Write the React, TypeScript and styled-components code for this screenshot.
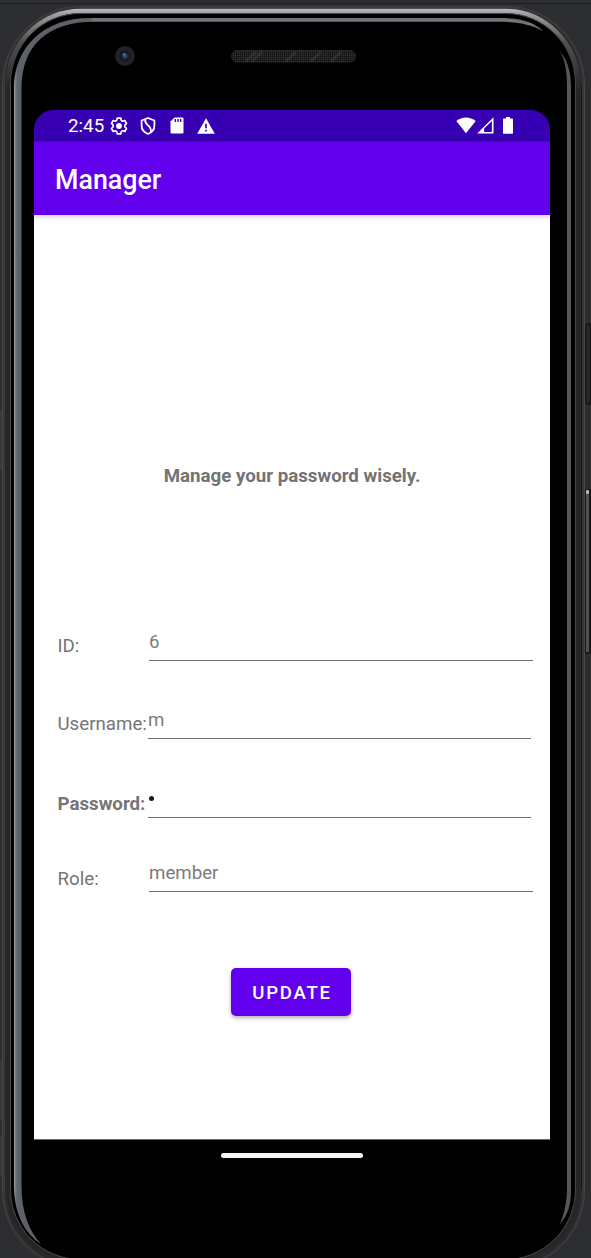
import React from "react";
import styled, { createGlobalStyle } from "styled-components";

const GlobalStyle = createGlobalStyle`
  * { box-sizing: border-box; }
  body { margin: 0; background: #2b2d30; font-family: Roboto, "Liberation Sans", sans-serif; }
`;

const Stage = styled.div`
  position: relative;
  width: 591px;
  height: 1258px;
  overflow: hidden;
  background: #2b2d30;
`;

const Bezel = styled.svg`
  position: absolute;
  inset: 0;
  display: block;
`;

const Phone = styled.div`
  position: relative;
  display: flex;
  flex-direction: column;
  height: 100%;
  padding: 0 41px 0 34px;
`;

const Forehead = styled.div`
  height: 110px;
  flex: none;
`;

const Screen = styled.main`
  display: flex;
  flex-direction: column;
  flex: none;
  height: 1029.5px;
  background: linear-gradient(#3700b3 40px, #fff 40px);
  border-bottom: 1px solid #6b6b6b;
  border-radius: 20px 20px 0 0;
  overflow: hidden;
`;

const StatusBar = styled.div`
  display: flex;
  flex: none;
  align-items: center;
  height: 31px;
  padding: 0 37px 0 34px;
  background: #3700b3;
  color: #fff;
`;

const Clock = styled.span`
  width: 42px;
  font-size: 18.8px;
  line-height: 31px;
  padding-top: 1px;
`;

const StatusIcons = styled.div<{ $gap: number }>`
  display: flex;
  align-items: center;
  gap: ${(p) => p.$gap}px;
`;

const Spacer = styled.div`
  flex: 1;
`;

const AppBar = styled.header`
  flex: none;
  height: 74px;
  padding-left: 21px;
  background: linear-gradient(#4b00d2 1px, #6200ee 1px);
  box-shadow: 0 1px 5px rgba(0, 0, 0, 0.25);
`;

const Title = styled.h1`
  margin: 0;
  color: #fff;
  font-size: 26.8px;
  font-weight: 500;
  line-height: 79px;
`;

const Content = styled.section`
  display: flex;
  flex-direction: column;
`;

const Headline = styled.p`
  margin: 249px 0 0;
  color: #737373;
  font-size: 18.7px;
  font-weight: 700;
  line-height: 24px;
  text-align: center;
`;

const Form = styled.div`
  display: flex;
  flex-direction: column;
  padding: 141px 0 0 23px;
`;

const Row = styled.label<{ $height: number }>`
  display: flex;
  align-items: flex-end;
  height: ${(p) => p.$height}px;
`;

const Label = styled.span<{ $bold?: boolean; $lift: number; $width: number }>`
  flex: none;
  width: ${(p) => p.$width}px;
  margin-bottom: ${(p) => p.$lift}px;
  padding-left: 0.5px;
  color: #757575;
  font-size: 18.7px;
  font-weight: ${(p) => (p.$bold ? 700 : 400)};
  line-height: 22px;
  white-space: nowrap;
`;

const Field = styled.span<{ $width: number; $dark?: boolean }>`
  width: ${(p) => p.$width}px;
  padding-bottom: 7px;
  border-bottom: 1.4px solid #707070;
  color: ${(p) => (p.$dark ? "#212121" : "#7b7b7b")};
  font-size: 18.7px;
  line-height: 22px;
`;

const Dot = styled.i`
  display: block;
  width: 5px;
  height: 5px;
  margin: 8px 0 9px 1px;
  border-radius: 50%;
  background: #1c1c1c;
`;

const UpdateButton = styled.button`
  align-self: center;
  width: 120px;
  height: 48px;
  margin: 76px 2px 0 0;
  padding: 1px 0 0 2px;
  border: 0;
  border-radius: 5px;
  background: #6200ee;
  box-shadow: 0 2px 4px rgba(0, 0, 0, 0.32);
  color: #fff;
  font: 500 18.6px/24px Roboto, sans-serif;
  letter-spacing: 1.75px;
`;

const Navigation = styled.nav`
  display: flex;
  justify-content: center;
  padding-top: 13px;
`;

const HomeHandle = styled.span`
  width: 142px;
  height: 5px;
  border-radius: 3px;
  background: #f4f4f4;
`;

const PhoneBody = () => (
  <Bezel width="591" height="1258" viewBox="0 0 591 1258" fill="none">
    <defs>
      <linearGradient id="rim" x1="0" y1="9" x2="0" y2="90" gradientUnits="userSpaceOnUse">
        <stop offset="0" stopColor="#b6b9bb" />
        <stop offset=".07" stopColor="#999c9e" />
        <stop offset=".4" stopColor="#505152" />
        <stop offset="1" stopColor="#262626" />
      </linearGradient>
      <linearGradient id="glassLeft" x1="14" y1="0" x2="22" y2="0" gradientUnits="userSpaceOnUse">
        <stop offset="0" stopColor="#a5a7a9" />
        <stop offset=".25" stopColor="#686c70" />
        <stop offset=".7" stopColor="#5c6168" />
        <stop offset="1" stopColor="#5e6268" />
      </linearGradient>
      <radialGradient id="lens">
        <stop offset="0" stopColor="#526398" />
        <stop offset=".3" stopColor="#26365f" />
        <stop offset=".65" stopColor="#172039" />
        <stop offset="1" stopColor="#111318" />
      </radialGradient>
      <pattern id="mesh" width="2" height="2" patternUnits="userSpaceOnUse">
        <rect width="2" height="2" fill="#1d1f1f" />
        <rect width="1" height="1" fill="#101111" />
        <rect x="1" y="1" width="1" height="1" fill="#303333" />
      </pattern>
    </defs>
    <path d="M0 3.5H591" stroke="#1d1e21" />
    <path d="M0 410h2v60H0zM0 1060h2v60H0zM0 1136h2v40H0z" fill="#38393d" />
    <rect x="2.5" y="6.5" width="582" height="1262" rx="78" fill="#292929" stroke="#484647" />
    <rect x="4" y="7.5" width="579" height="1260" rx="76" stroke="#393839" strokeWidth="2" />
    <rect x="8" y="11" width="570" height="1250" rx="73" stroke="url(#rim)" strokeWidth="4.5" />
    <rect x="10.5" y="13.5" width="565" height="1246" rx="70" fill="#000" stroke="#484848" />
    <path d="M581.5 85V1190" stroke="#161616" />
    <path d="M14 1185V88C14 48 43 18 90 18L94 21.8C47 21.8 21.5 46 21.5 89V1185C21.5 1211 28 1230 41 1244C24 1233 14 1213 14 1185Z" fill="url(#glassLeft)" />
    <path d="M90 18H500C520 18 534 22 543 31C532 25 518 21.8 500 21.8H93Z" fill="#70747b" />
    <path d="M559.5 51C567 59 571 71 571 87V1190C571 1205 568 1215 560 1224C565 1211 567 1201 567 1188V87C567 71 565 59 559.5 51Z" fill="#57575b" />
    <g>
      <rect x="585" y="323" width="8" height="82" rx="2" fill="#191919" />
      <path d="M588 326V402" stroke="#292a29" strokeWidth="3" />
      <rect x="585" y="489" width="8" height="165" rx="2" fill="#171717" />
      <path d="M587.5 491V652" stroke="#50504e" strokeWidth="3" />
      <rect x="586" y="490" width="3" height="4" rx="1" fill="#b7b7b5" />
    </g>
    <circle cx="125" cy="56" r="10" fill="#222324" />
    <circle cx="125" cy="56" r="5.5" fill="url(#lens)" />
    <circle cx="124" cy="54.5" r="1.2" fill="#6074a9" />
    <rect x="231.5" y="50.5" width="124" height="11.5" rx="5.75" fill="url(#mesh)" stroke="#252727" />
    <path d="M246 61l10-9M252 61l10-9M286 61l10-9M311 61l10-9M331 61l10-9" stroke="#4b4f4e" strokeWidth="3" opacity=".35" />
  </Bezel>
);

const Settings = () => (
  <svg width="18" height="18" viewBox="0 0 18 18" fill="none" stroke="#fff" strokeWidth="1.7" strokeLinejoin="round">
    <path d="M7.2 1.2h3.6l.5 2.2 1.3.8 2.2-.7 1.7 3-1.6 1.6v1.8l1.6 1.6-1.7 3-2.2-.7-1.3.8-.5 2.2H7.2l-.5-2.2-1.3-.8-2.2.7-1.7-3 1.6-1.6V8.1L1.5 6.5l1.7-3 2.2.7 1.3-.8z" />
    <circle cx="9" cy="9" r="2.9" fill="#fff" stroke="none" />
  </svg>
);

const Shield = () => (
  <svg width="16" height="18" viewBox="1 0 16 18" fill="none" stroke="#fff" strokeWidth="1.8" strokeLinejoin="round" overflow="visible">
    <path d="M8 1L14.4 3.5V8.5C14.4 12.5 11.7 15.6 8 17C4.3 15.6 1.6 12.5 1.6 8.5V3.5Z" />
    <path d="M5.2 2.3C4.8 5.4 6.2 6.9 8 8.4C10.1 10.1 11.3 11.7 10.9 15" />
  </svg>
);

const Storage = () => (
  <svg width="14" height="17" viewBox="0 0 14 17">
    <path d="M4.5.5H12.2Q13.5.5 13.5 1.8V15.2Q13.5 16.5 12.2 16.5H1.8Q.5 16.5.5 15.2V4.5Z" fill="#fff" />
    <path d="M5.3 2v3M8 2v3M10.7 2v3" stroke="#3700b3" strokeWidth="1.4" />
  </svg>
);

const Warning = () => (
  <svg width="18" height="16" viewBox="0 0 18 16">
    <path d="M9 .3L17.8 15.7H.2Z" fill="#fff" />
    <path d="M9 5.8v4.5M9 11.8v1.8" stroke="#3700b3" strokeWidth="1.7" />
  </svg>
);

const Wifi = () => (
  <svg width="20" height="17" viewBox="0 0 20 17">
    <path d="M.3 4.1C5.7-.7 14.3-.7 19.7 4.1L10 16.2Z" fill="#fff" />
  </svg>
);

const Signal = () => (
  <svg width="17" height="17" viewBox="0 0 17 17">
    <path fillRule="evenodd" d="M16.5.2V16.5H.2ZM14.9 4L7.1 11.6V15H14.9Z" fill="#fff" />
  </svg>
);

const Battery = () => (
  <svg width="10" height="17" viewBox="0 0 10 17">
    <path d="M3 0h4v1.6h2.1q.9 0 .9.9v13.4q0 .9-.9.9H.9q-.9 0-.9-.9V2.5q0-.9.9-.9H3z" fill="#fff" />
  </svg>
);

const BatterySlot = styled.span`
  display: flex;
  margin-left: 8px;
`;

export default function App() {
  return (
    <Stage>
      <GlobalStyle />
      <PhoneBody />
      <Phone>
        <Forehead />
        <Screen>
          <StatusBar>
            <Clock>2:45</Clock>
            <StatusIcons $gap={13}>
              <Settings />
              <Shield />
              <Storage />
              <Warning />
            </StatusIcons>
            <Spacer />
            <StatusIcons $gap={1}>
              <Wifi />
              <Signal />
              <BatterySlot><Battery /></BatterySlot>
            </StatusIcons>
          </StatusBar>
          <AppBar><Title>Manager</Title></AppBar>
          <Content>
            <Headline>Manage your password wisely.</Headline>
            <Form>
              <Row $height={32}>
                <Label $lift={4} $width={92}>ID:</Label>
                <Field $width={384}>6</Field>
              </Row>
              <Row $height={78}>
                <Label $lift={4} $width={91}>Username:</Label>
                <Field $width={383}>m</Field>
              </Row>
              <Row $height={79}>
                <Label $bold $lift={3} $width={91}>Password:</Label>
                <Field $width={383} $dark><Dot /></Field>
              </Row>
              <Row $height={74}>
                <Label $lift={2} $width={92}>Role:</Label>
                <Field $width={384}>member</Field>
              </Row>
            </Form>
            <UpdateButton type="button">UPDATE</UpdateButton>
          </Content>
        </Screen>
        <Navigation><HomeHandle /></Navigation>
      </Phone>
    </Stage>
  );
}
